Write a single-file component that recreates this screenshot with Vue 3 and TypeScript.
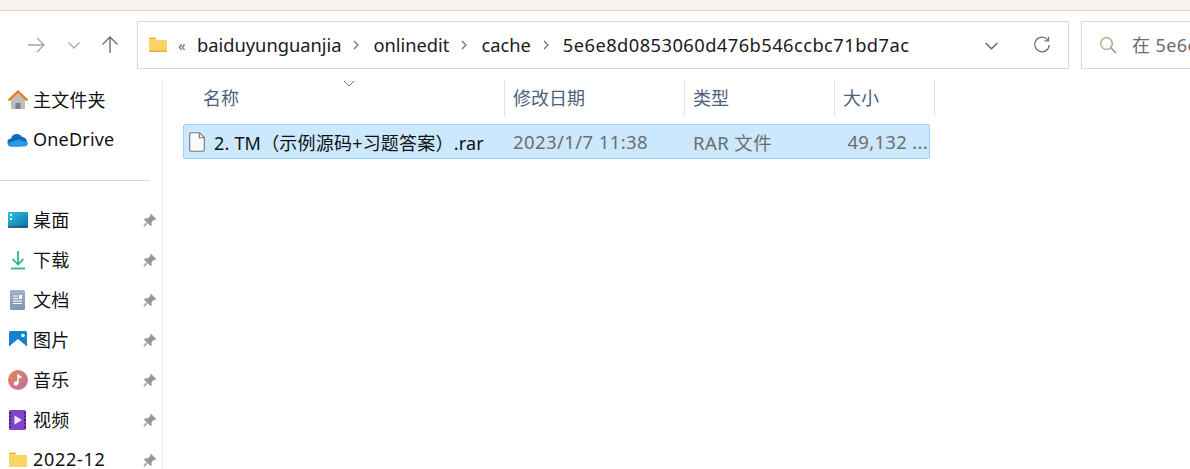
<script setup lang="ts">
interface Place { name: string; icon: string; digits?: boolean }
const top: Place[] = [
  { name: '主文件夹', icon: 'home' },
  { name: 'OneDrive', icon: 'cloud' },
]
const quick: Place[] = [
  { name: '桌面', icon: 'desktop' },
  { name: '下载', icon: 'download' },
  { name: '文档', icon: 'docs' },
  { name: '图片', icon: 'pictures' },
  { name: '音乐', icon: 'music' },
  { name: '视频', icon: 'video' },
  { name: '2022-12', icon: 'folder', digits: true },
]
const crumbs = ['baiduyunguanjia', 'onlinedit', 'cache', '5e6e8d0853060d476b546ccbc71bd7ac']
</script>

<template>
  <div class="window">
    <div class="titlestrip"></div>
    <div class="toolbar">
      <div class="nav">
        <svg class="forward" width="20" height="20" viewBox="0 0 20 20"><path d="M2 10h16M11 3l7 7-7 7" fill="none" stroke="#a3a3a3" stroke-width="1.3"/></svg>
        <svg class="recent" width="14" height="14" viewBox="0 0 14 14"><path d="M1.5 4.5 7 10l5.500-5.500" fill="none" stroke="#a8a8a8" stroke-width="1.300"/></svg>
        <svg class="up" width="20" height="20" viewBox="0 0 20 20"><path d="M10 18V2M2.500 9.500 10 2l7.500 7.500" fill="none" stroke="#6e6e6e" stroke-width="1.400"/></svg>
      </div>
      <div class="address">
        <svg class="addr-folder" width="20" height="16" viewBox="0 0 20 16">
          <path d="M1 1.500q0-1 1-1h5l2 2H1z" fill="#f7b01f"/>
          <path d="M1 3h17q1 0 1 1v10q0 1-1 1H2q-1 0-1-1z" fill="#fcd463"/>
          <path d="M1 13.500h18V14q0 1-1 1H2q-1 0-1-1z" fill="#eeb033"/>
        </svg>
        <span class="overflow">«</span>
        <template v-for="(c, i) in crumbs" :key="c">
          <svg v-if="i > 0" class="sep" width="8" height="10" viewBox="0 0 8 10"><path d="M2 1l4 4-4 4" fill="none" stroke="#6d6d6d" stroke-width="1.200"/></svg>
          <span class="crumb" :class="{ hash: i === crumbs.length - 1 }">{{ c }}</span>
        </template>
        <span class="grow"></span>
        <svg class="addr-chevron" width="13" height="8" viewBox="0 0 13 8"><path d="M.7 1 6.500 6.800 12.300 1" fill="none" stroke="#5f5f5f" stroke-width="1.300"/></svg>
        <svg class="refresh" width="18" height="18" viewBox="0 0 18 18">
          <path d="M14.600 3.800A7.300 7.300 0 1 0 16.300 9" fill="none" stroke="#6e6e6e" stroke-width="1.300"/>
          <path d="M15.500 0.800v4h-4" fill="none" stroke="#6e6e6e" stroke-width="1.300"/>
        </svg>
      </div>
      <div class="search">
        <svg class="search-icon" width="18" height="18" viewBox="0 0 18 18">
          <circle cx="7.500" cy="7.500" r="5.800" fill="none" stroke="#b59a7a" stroke-width="1.300"/>
          <path d="M11.800 11.800 17 17" stroke="#6f93b8" stroke-width="1.400"/>
        </svg>
        <span class="search-text">在 5e6e8d0853060d476b546ccbc71bd7ac 中搜索</span>
      </div>
    </div>

    <div class="body">
      <aside class="sidebar">
        <div v-for="p in top" :key="p.name" class="place">
          <span class="icon">
            <svg v-if="p.icon === 'home'" width="22" height="20" viewBox="0 0 22 20">
              <path d="M4 9l7-6.500L18 9v10H4z" fill="#bdbdbd"/>
              <path d="M8.500 19v-6h5v6z" fill="#7f7f7f"/>
              <path d="M1.500 10.500 11 1.500l9.500 9" fill="none" stroke="#e8790f" stroke-width="2.200"/>
            </svg>
            <svg v-else width="22" height="14" viewBox="0 0 22 14">
              <path d="M5 13.500a4 4 0 0 1-1-8 6 6 0 0 1 11-1.500 5 5 0 0 1 5 5l-6 4.500z" fill="#0f6cbd"/>
              <path d="M5 13.500q-3.800 0-4-3l10-4 10 3q0 4-3.500 4z" fill="#2b9ae6"/>
            </svg>
          </span>
          <span class="label">{{ p.name }}</span>
        </div>
        <div class="rule"></div>
        <div v-for="p in quick" :key="p.name" class="place">
          <span class="icon">
            <svg v-if="p.icon === 'desktop'" width="20" height="16" viewBox="0 0 20 16">
              <defs><linearGradient id="d" x1="0" y1="0" x2="1" y2="1"><stop offset="0" stop-color="#2fc1e0"/><stop offset="1" stop-color="#0c6fa8"/></linearGradient></defs>
              <rect width="20" height="15.500" rx="1" fill="url(#d)"/>
              <rect x="2" y="2" width="2" height="2" fill="#fff"/><rect x="2" y="6" width="2" height="2" fill="#fff"/>
              <rect y="14.500" width="20" height="1.200" fill="#0a3d5c"/>
            </svg>
            <svg v-else-if="p.icon === 'download'" width="16" height="20" viewBox="0 0 16 20">
              <path d="M8 1v13M2.500 9 8 14.500 13.500 9" fill="none" stroke="#27b28e" stroke-width="1.700"/>
              <path d="M1 18.500h14" stroke="#27b28e" stroke-width="1.800"/>
            </svg>
            <svg v-else-if="p.icon === 'docs'" width="15" height="20" viewBox="0 0 15 20">
              <defs><linearGradient id="o" x1="0" y1="0" x2="0" y2="1"><stop offset="0" stop-color="#9fb3cc"/><stop offset="1" stop-color="#7f95b5"/></linearGradient></defs>
              <rect width="15" height="20" rx="1.500" fill="url(#o)"/>
              <path d="M3 6h5M3 8.500h5M3 11h9M3 13.500h9" stroke="#fff" stroke-width="1"/>
              <rect x="9" y="5" width="3" height="4" fill="#fff"/>
            </svg>
            <svg v-else-if="p.icon === 'pictures'" width="18" height="18" viewBox="0 0 18 18">
              <rect width="18" height="18" rx="1.500" fill="#1482d2"/>
              <path d="M0 15.500 9 8l9 7.500V18H0z" fill="#fff"/>
              <circle cx="14" cy="4.500" r="1.800" fill="#fff"/>
            </svg>
            <svg v-else-if="p.icon === 'music'" width="20" height="20" viewBox="0 0 20 20">
              <defs><linearGradient id="m" x1="0" y1="0" x2="1" y2="1"><stop offset="0" stop-color="#e98550"/><stop offset="1" stop-color="#b86da8"/></linearGradient></defs>
              <circle cx="10" cy="10" r="10" fill="url(#m)"/>
              <path d="M10 4.500v9" stroke="#fff" stroke-width="1.500"/>
              <path d="M10 4.500q.5 2.500 3.500 3" fill="none" stroke="#fff" stroke-width="1.500"/>
              <circle cx="8" cy="13.500" r="2.200" fill="#fff"/>
            </svg>
            <svg v-else-if="p.icon === 'video'" width="17" height="20" viewBox="0 0 17 20">
              <rect width="17" height="20" rx="1.500" fill="#8243c9"/>
              <path d="M1 2v16M16 2v16" stroke="#3d1f70" stroke-width="1.800" stroke-dasharray="2 1.500"/>
              <path d="M5.500 5.500 13 10l-7.500 4.500z" fill="#f2eafc"/>
            </svg>
            <svg v-else width="20" height="16" viewBox="0 0 20 16">
              <path d="M1 1.500q0-1 1-1h5l2 2H1z" fill="#f7b01f"/>
              <path d="M1 3h17q1 0 1 1v10q0 1-1 1H2q-1 0-1-1z" fill="#fcd463"/>
            </svg>
          </span>
          <span class="label" :class="{ digits: p.digits }">{{ p.name }}</span>
          <svg class="pin" width="14" height="14" viewBox="0 0 14 14">
            <path d="M8 .8 13.200 6 12 7l-1-.3L8.500 9.200 8.800 12 7.600 13 1 6.400 2 5.200l2.800.3L7.300 3 7 2z" fill="#8e979e"/>
            <path d="M4 10 .8 13.200" stroke="#8e979e" stroke-width="1.400"/>
          </svg>
        </div>
      </aside>

      <main class="files">
        <svg class="sort" width="12" height="7" viewBox="0 0 12 7"><path d="M1 1l5 5 5-5" fill="none" stroke="#7a7a7a" stroke-width="1"/></svg>
        <div class="header">
          <div class="col col-name">名称</div>
          <div class="col col-date">修改日期</div>
          <div class="col col-type">类型</div>
          <div class="col col-size">大小</div>
        </div>
        <div class="row">
          <div class="cell cell-name">
            <svg class="file-icon" width="18" height="20" viewBox="0 0 18 20">
              <path d="M2 .7h9.500L16.300 5.500V18a1.300 1.300 0 0 1-1.300 1.300H3A1.300 1.300 0 0 1 1.700 18V2A1.300 1.300 0 0 1 3 .7z" fill="#fafafa" stroke="#777" stroke-width="1.100"/>
              <path d="M11.300.9v4.800h4.800" fill="none" stroke="#777" stroke-width="1.100"/>
            </svg>
            <span class="fname">2. TM（示例源码+习题答案）.rar</span>
          </div>
          <div class="cell cell-date">2023/1/7 11:38</div>
          <div class="cell cell-type">RAR 文件</div>
          <div class="cell cell-size">49,132 ...</div>
        </div>
      </main>
    </div>
  </div>
</template>

<style>
html, body { margin: 0; background: #fff; overflow: hidden; }
</style>

<style scoped>
.window {
  width: 1190px;
  height: 469px;
  overflow: hidden;
  background: #fff;
  font-family: "Noto Sans", "Noto Sans CJK SC", sans-serif;
  font-size: 18px;
  color: #1a1a1a;
  display: flex;
  flex-direction: column;
}
.titlestrip {
  height: 10px;
  flex: none;
  background: #f9f1ee;
  border-bottom: 1px solid #e6cfc4;
}
.toolbar {
  flex: none;
  height: 48px;
  margin-top: 10px;
  display: flex;
}
.nav {
  width: 137px;
  flex: none;
  display: flex;
  align-items: center;
}
.forward { margin-left: 26px; }
.recent { margin-left: 21px; }
.up { margin-left: 19px; }
.address {
  width: 932px;
  flex: none;
  box-sizing: border-box;
  border: 1px solid #d9d9d9;
  display: flex;
  align-items: center;
  padding-left: 10px;
}
.overflow { margin-left: 10px; width: 19px; color: #6d6d6d; font-size: 15px; }
.crumb { white-space: nowrap; font-size: 18.300px; color: #1a1a1a; padding-bottom: 2px; }
.hash { letter-spacing: 0.450px; }
.sep { margin: 0 13px 0 11px; flex: none; }
.grow { flex: 1; }
.addr-chevron { margin-right: 35px; margin-top: 1px; }
.refresh { margin-right: 17px; }
.search {
  margin-left: 12px;
  flex: 1;
  min-width: 0;
  box-sizing: border-box;
  border: 1px solid #d9d9d9;
  border-right: none;
  display: flex;
  align-items: center;
  padding-left: 17px;
  overflow: hidden;
}
.search-icon { flex: none; }
.search-text { margin-left: 15px; color: #6b6b6b; white-space: nowrap; font-size: 18px; letter-spacing: 0.400px; padding-bottom: 2px; }
.body {
  flex: 1;
  min-height: 0;
  margin-top: 11px;
  display: flex;
  overflow: hidden;
}
.sidebar {
  width: 163px;
  flex: none;
  box-sizing: border-box;
  border-right: 1px solid #ededed;
}
.place {
  height: 40px;
  display: flex;
  align-items: center;
  position: relative;
}
.icon {
  width: 33px;
  flex: none;
  display: flex;
  justify-content: center;
  box-sizing: border-box;
  padding-left: 4px;
  padding-right: 2px;
}
.label { white-space: nowrap; font-size: 18px; letter-spacing: 0.200px; color: #111; padding-bottom: 3px; }
.label.digits { letter-spacing: 0.700px; }
.pin { position: absolute; left: 143px; top: 13px; }
.rule {
  height: 1px;
  width: 150px;
  margin: 20px 0 19px;
  background: #d9d9d9;
}
.files {
  flex: 1;
  position: relative;
  padding-left: 20px;
}
.sort { position: absolute; left: 180px; top: 0; }
.header {
  height: 36px;
  display: flex;
  margin-left: 12px;
}
.col {
  box-sizing: border-box;
  border-right: 1px solid #e3e3e3;
  padding-left: 8px;
  line-height: 36px;
  color: #4c607a;
  white-space: nowrap;
  font-size: 18px;
}
.col-name { width: 310px; }
.col-date { width: 180px; }
.col-type { width: 150px; }
.col-size { width: 100px; }
.row {
  margin-top: 8px;
  width: 747px;
  height: 35px;
  box-sizing: border-box;
  background: #cce8ff;
  border: 1px solid #99d1ff;
  border-radius: 2px;
  display: flex;
  align-items: center;
  white-space: nowrap;
  font-size: 18.500px;
}
.cell { box-sizing: border-box; color: #6d6d6d; letter-spacing: 0.400px; }
.cell-name {
  width: 321px;
  padding-left: 4px;
  display: flex;
  align-items: center;
  gap: 8px;
  color: #111;
  letter-spacing: 0;
}
.file-icon { flex: none; }
.fname { font-size: 18px; letter-spacing: 0.200px; }
.cell-date { width: 180px; padding-left: 8px; }
.cell-type { width: 150px; padding-left: 8px; }
.cell-size { width: 94px; text-align: right; padding-right: 1px; letter-spacing: 0.300px; }
</style>
